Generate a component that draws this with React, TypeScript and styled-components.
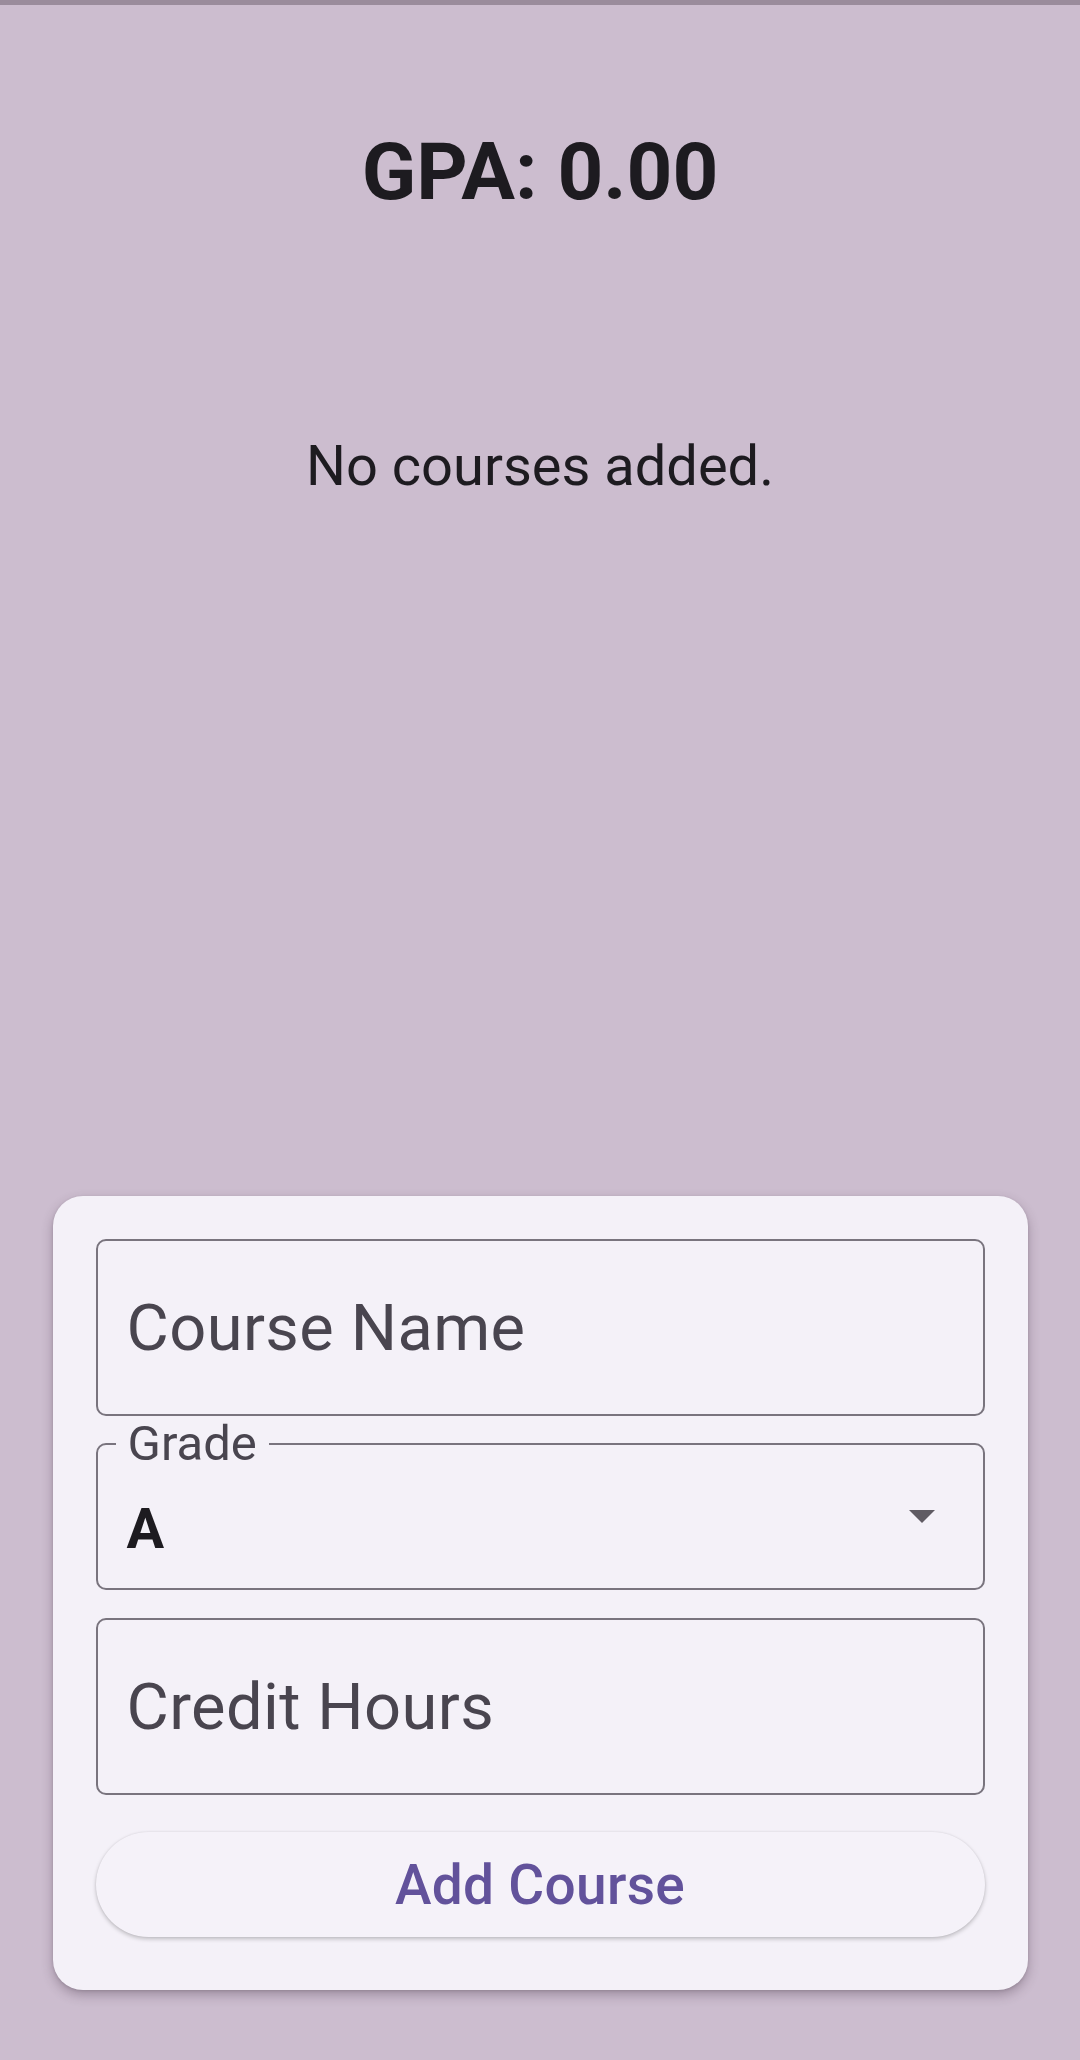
import React from "react";
import styled, { createGlobalStyle } from "styled-components";

const GlobalStyle = createGlobalStyle`
  html, body {
    margin: 0;
    padding: 0;
    background: #ccbdcf;
  }
  body {
    font-family: Roboto, "Noto Sans", "Liberation Sans", sans-serif;
  }
  * { box-sizing: border-box; }
`;

const Page = styled.div`
  height: 100vh;
  display: flex;
  flex-direction: column;
  background: #ccbdcf;
  overflow: hidden;
`;

const StatusStrip = styled.div`
  height: 5px;
  flex: none;
  background: #9a8c9c;
`;

const Title = styled.h1`
  margin: 128px 0 0;
  font-size: 80px;
  line-height: 79px;
  font-weight: 700;
  color: #1d1b20;
  text-align: center;
`;

const EmptyText = styled.p`
  margin: 226px 0 0;
  font-size: 56px;
  line-height: 56px;
  font-weight: 400;
  color: #1d1b20;
  text-align: center;
`;

const Spacer = styled.div`
  flex: 1;
`;

const Card = styled.form`
  width: 975px;
  margin: 0 auto 70px;
  padding: 43px 43px 53px;
  background: #f4f1f8;
  border-radius: 30px;
  box-shadow: 0 5px 12px rgba(60, 40, 60, 0.32), 0 1px 3px rgba(0, 0, 0, 0.12);
  display: flex;
  flex-direction: column;
`;

const Outlined = styled.div<{ $space?: number }>`
  height: 177px;
  margin-top: ${(p) => p.$space ?? 0}px;
  border: 2px solid #79747e;
  border-radius: 10px;
  padding: 0 29px;
  display: flex;
  align-items: center;
`;

const Placeholder = styled.span`
  font-size: 65px;
  line-height: 64px;
  letter-spacing: 0.4px;
  color: #49454f;
  font-weight: 400;
`;

const SelectBox = styled.fieldset<{ $space?: number }>`
  margin: ${(p) => p.$space ?? 0}px 0 0;
  padding: 0 29px;
  min-width: 0;
  border: 2px solid #79747e;
  border-radius: 10px;
`;

const Legend = styled.legend`
  margin-left: -11px;
  padding: 0 12px;
  font-size: 49px;
  line-height: 47px;
  color: #49454f;
  font-weight: 400;
`;

const SelectRow = styled.div`
  height: 121px;
  display: flex;
  align-items: center;
  justify-content: space-between;
`;

const SelectValue = styled.span`
  padding-top: 3px;
  font-size: 56px;
  line-height: 55px;
  font-weight: 700;
  color: #1d1b20;
`;

const Caret = styled.svg`
  align-self: flex-start;
  margin-top: 43px;
  margin-right: 19px;
  width: 26px;
  height: 13px;
  flex: none;
`;

const AddButton = styled.button<{ $space?: number }>`
  margin-top: ${(p) => p.$space ?? 0}px;
  height: 105px;
  border: none;
  border-radius: 53px;
  background: #f5f2f9;
  box-shadow: 0 2px 4px rgba(0, 0, 0, 0.22), 0 0 2px rgba(0, 0, 0, 0.08);
  font-family: Roboto, "Noto Sans", "Liberation Sans", sans-serif;
  font-size: 55px;
  font-weight: 500;
  letter-spacing: 0.3px;
  color: #62529b;
  display: flex;
  align-items: center;
  justify-content: center;
  cursor: pointer;
`;

export default function App() {
  return (
    <>
      <GlobalStyle />
      <Page>
        <StatusStrip />
        <Title>GPA: 0.00</Title>
        <EmptyText>No courses added.</EmptyText>
        <Spacer />
        <Card onSubmit={(e) => e.preventDefault()}>
          <Outlined>
            <Placeholder>Course Name</Placeholder>
          </Outlined>
          <SelectBox $space={4}>
            <Legend>Grade</Legend>
            <SelectRow>
              <SelectValue>A</SelectValue>
              <Caret viewBox="0 0 26 13">
                <path d="M0 0 L26 0 L13 13 Z" fill="#5f5b63" />
              </Caret>
            </SelectRow>
          </SelectBox>
          <Outlined $space={28}>
            <Placeholder>Credit Hours</Placeholder>
          </Outlined>
          <AddButton type="button" $space={37}>
            Add Course
          </AddButton>
        </Card>
      </Page>
    </>
  );
}
